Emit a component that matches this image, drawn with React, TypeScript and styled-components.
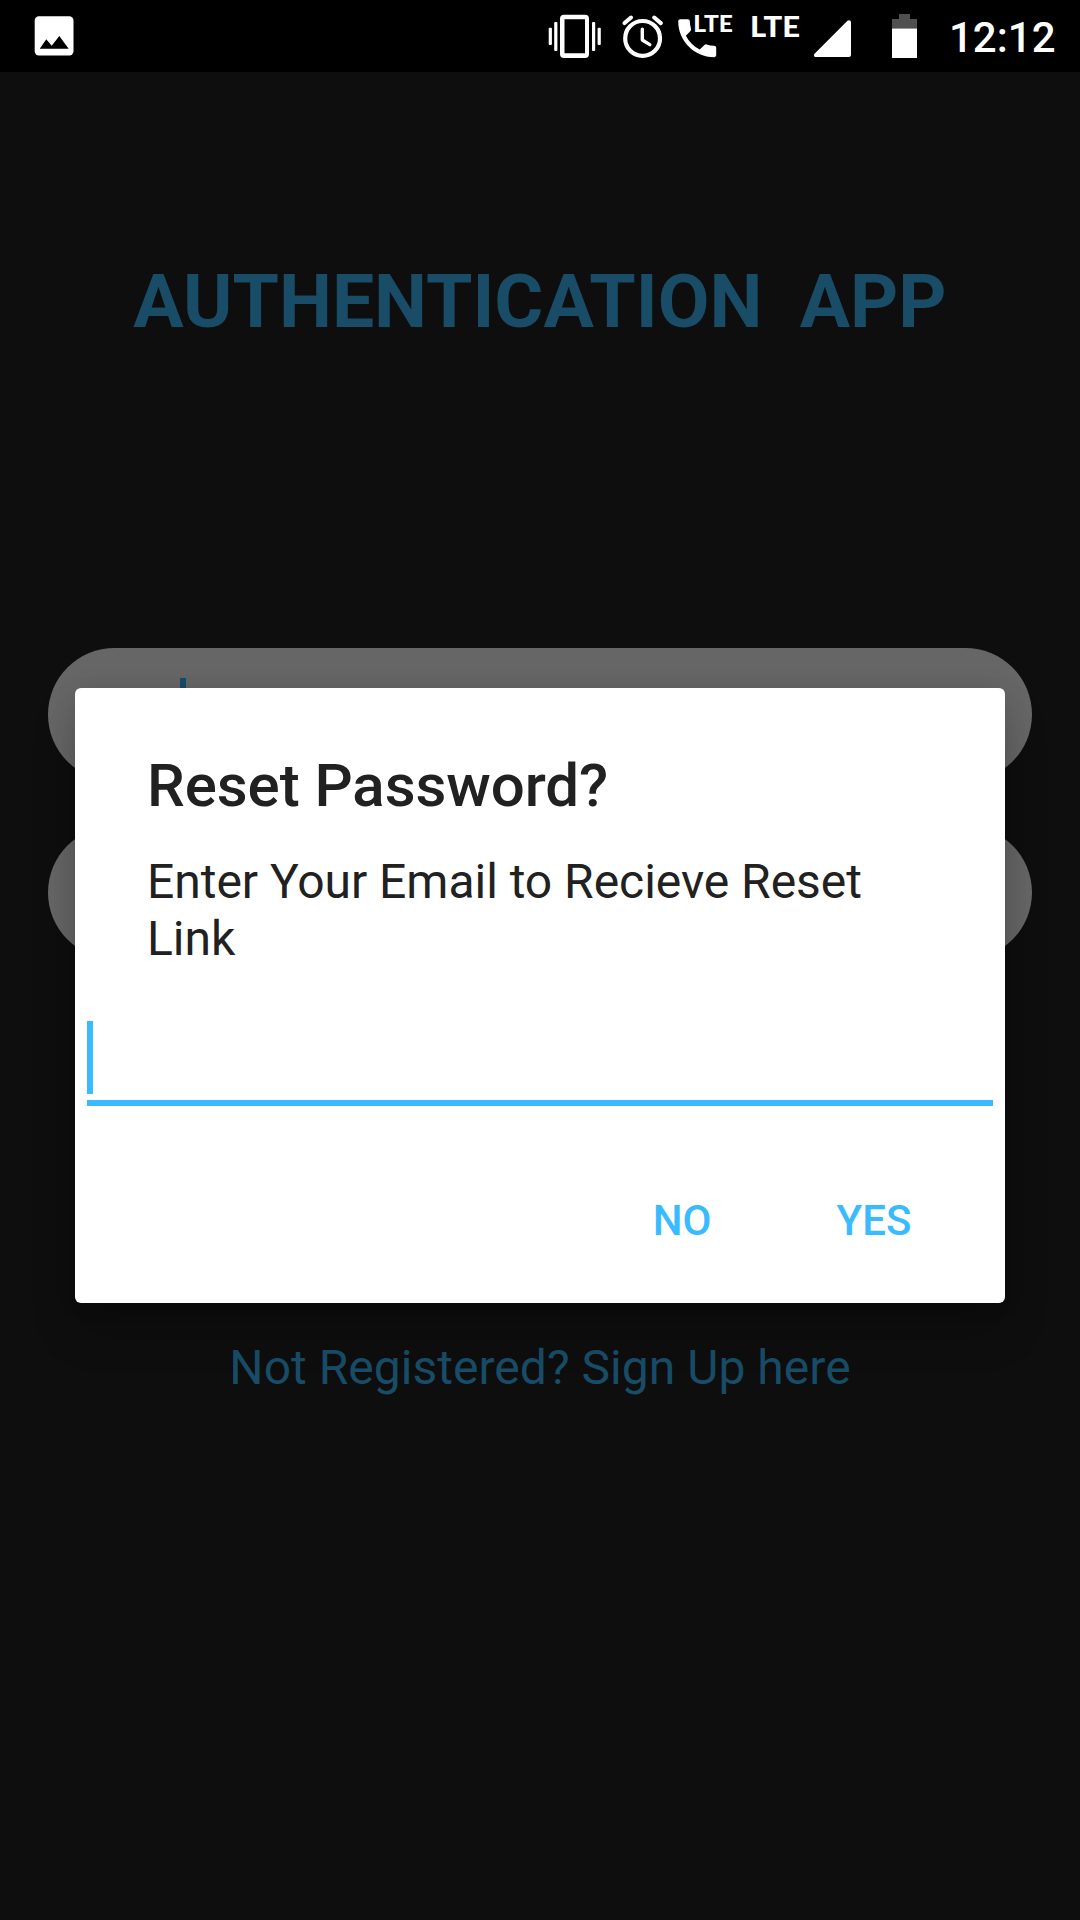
import React from 'react';
import styled, { createGlobalStyle } from 'styled-components';

const ACCENT = '#3bbbff';
const DIMMED_ACCENT = '#184c67';

const GlobalStyle = createGlobalStyle`
  body {
    margin: 0;
    background: #0e0e0e;
    font-family: Roboto, sans-serif;
  }
`;

const Screen = styled.div`
  position: relative;
  display: flex;
  flex-direction: column;
  width: 1080px;
  height: 1920px;
  overflow: hidden;
  background: #0e0e0e;
`;

const StatusBar = styled.header`
  display: flex;
  align-items: center;
  justify-content: space-between;
  box-sizing: border-box;
  height: 72px;
  padding: 0 24px 0 30px;
  background: #000;
  color: #fff;
`;

const StatusIcons = styled.div`
  display: flex;
  align-items: center;
`;

const Icon = styled.svg<{ $gap?: number }>`
  display: block;
  flex: none;
  height: 72px;
  margin-left: ${({ $gap = 0 }) => $gap}px;
  fill: #fff;
`;

const IconText = styled.text`
  font-family: Lato, sans-serif;
  font-weight: 900;
`;

const Clock = styled.time`
  width: 106px;
  margin: 3px 1px 0 31px;
  font-size: 42px;
  font-weight: 500;
  line-height: 50px;
  text-align: right;
  white-space: nowrap;
`;

const LoginPage = styled.main`
  display: flex;
  flex: 1;
  flex-direction: column;
  align-items: center;
`;

const AppTitle = styled.h1`
  margin: 185px 0 0;
  color: ${DIMMED_ACCENT};
  font-size: 75px;
  font-weight: 700;
  line-height: 88px;
  white-space: pre;
`;

const Fields = styled.div`
  display: flex;
  flex-direction: column;
  gap: 45px;
  margin-top: 303px;
`;

const Field = styled.div`
  box-sizing: border-box;
  width: 984px;
  height: 133px;
  padding: 30px 0 0 132px;
  border-radius: 66.5px;
  background: #666;
`;

const Caret = styled.span<{ $color: string }>`
  display: block;
  width: 6px;
  height: 73px;
  background: ${({ $color }) => $color};
`;

const SignUpLink = styled.a`
  margin-top: 381px;
  color: ${DIMMED_ACCENT};
  font-size: 48px;
  line-height: 56px;
  letter-spacing: 0.03px;
`;

const DialogLayer = styled.div`
  position: absolute;
  inset: 72px 0 0;
  display: flex;
  align-items: flex-start;
  justify-content: center;
`;

const Dialog = styled.section`
  display: flex;
  flex-direction: column;
  box-sizing: border-box;
  width: 930px;
  height: 615px;
  margin-top: 616px;
  border-radius: 6px;
  background: #fff;
  box-shadow: 0 28px 44px rgba(0, 0, 0, 0.2), 0 0 24px rgba(0, 0, 0, 0.08);
  color: #212121;
`;

const DialogTitle = styled.h2`
  margin: 63px 72px 0;
  font-size: 60px;
  font-weight: 500;
  line-height: 70px;
  letter-spacing: -0.06px;
`;

const Message = styled.p`
  margin: 32px 72px 0;
  font-size: 48px;
  line-height: 57px;
  letter-spacing: -0.03px;
`;

const EmailInput = styled.div`
  margin: 54px 12px 0;
  padding-bottom: 6px;
  border-bottom: 6px solid ${ACCENT};
`;

const Actions = styled.div`
  display: flex;
  justify-content: flex-end;
  gap: 24px;
  margin: 43px 59px 0;
`;

const ActionButton = styled.button<{ $width: number }>`
  width: ${({ $width }) => $width}px;
  height: 144px;
  padding: 0;
  border: 0;
  background: transparent;
  color: ${ACCENT};
  font: 500 42px/50px Roboto, sans-serif;
`;

const PictureIcon = () => (
  <Icon width="48" viewBox="30 0 48 72">
    <rect x="34.7" y="16.3" width="38.8" height="39.2" rx="4.2" />
    <path fill="#000" d="M39.7 48.7 46.3 39.2 51.7 45.7 59.3 36 68.7 48.7z" />
  </Icon>
);

const VibrateIcon = () => (
  <Icon width="54" viewBox="548 0 54 72">
    <path
      fillRule="evenodd"
      d="M564 14.7h21a4 4 0 0 1 4 4V54a4 4 0 0 1-4 4h-21a4 4 0 0 1-4-4V18.7a4 4 0 0 1 4-4zM564.5 19.2V53.3H585V19.2z"
    />
    <rect x="554.2" y="22" width="3.2" height="29" rx="1" />
    <rect x="548.7" y="27.7" width="3.2" height="17.3" rx="1" />
    <rect x="592" y="22" width="3.2" height="29" rx="1" />
    <rect x="597.6" y="27.7" width="3.2" height="17.3" rx="1" />
  </Icon>
);

const AlarmIcon = () => (
  <Icon $gap={20} width="42" viewBox="622 0 42 72">
    <g fill="none" stroke="#fff" strokeLinecap="round" strokeLinejoin="round">
      <circle cx="642.6" cy="38.4" r="17.4" strokeWidth="4.2" />
      <path strokeWidth="3.4" d="M642.3 29.3V40L649.8 44.6" />
      <path strokeWidth="4" d="M624.6 23.1 631 17.5M654.2 17.5 660.8 23.1" />
    </g>
  </Icon>
);

const LteCallIcon = () => (
  <Icon $gap={12} width="58" viewBox="676 0 58 72">
    <path
      transform="translate(671.9 12.9) scale(2.11)"
      d="M6.62 10.79c1.44 2.83 3.76 5.14 6.59 6.59l2.2-2.2c.27-.27.67-.36 1.02-.24 1.12.37 2.33.57 3.57.57.55 0 1 .45 1 1V20c0 .55-.45 1-1 1-9.39 0-17-7.61-17-17 0-.55.45-1 1-1h3.5c.55 0 1 .45 1 1 0 1.25.2 2.45.57 3.57.11.35.03.74-.25 1.02l-2.2 2.2z"
    />
    <IconText x="693.3" y="32.1" fontSize="22.6" textLength="39.6" lengthAdjust="spacingAndGlyphs">LTE</IconText>
  </Icon>
);

const LteIcon = () => (
  <Icon $gap={16} width="50" viewBox="750 0 50 72">
    <IconText x="750" y="36.8" fontSize="29" textLength="50" lengthAdjust="spacingAndGlyphs">LTE</IconText>
  </Icon>
);

const SignalIcon = () => (
  <Icon $gap={14} width="38" viewBox="814 0 38 72">
    <path d="M847.2 21 814.8 53.6C813 55.4 814 57 816 57H849a2 2 0 0 0 2-2V22.5C851 20.2 848.8 19.4 847.2 21z" />
  </Icon>
);

const BatteryIcon = () => (
  <Icon $gap={40} width="26" viewBox="892 0 26 72">
    <path fill="#505050" d="M899 14h11v5h7v10h-25V19h7z" />
    <rect x="892" y="28.6" width="25" height="29.4" />
  </Icon>
);

export default function App() {
  return (
    <>
      <GlobalStyle />
      <Screen>
        <StatusBar>
          <PictureIcon />
          <StatusIcons>
            <VibrateIcon />
            <AlarmIcon />
            <LteCallIcon />
            <LteIcon />
            <SignalIcon />
            <BatteryIcon />
            <Clock>12:12</Clock>
          </StatusIcons>
        </StatusBar>
        <LoginPage>
          <AppTitle>{'AUTHENTICATION  APP'}</AppTitle>
          <Fields>
            <Field>
              <Caret $color={DIMMED_ACCENT} />
            </Field>
            <Field />
          </Fields>
          <SignUpLink>Not Registered? Sign Up here</SignUpLink>
        </LoginPage>
        <DialogLayer>
          <Dialog role="dialog">
            <DialogTitle>Reset Password?</DialogTitle>
            <Message>Enter Your Email to Recieve Reset Link</Message>
            <EmailInput>
              <Caret $color={ACCENT} />
            </EmailInput>
            <Actions>
              <ActionButton $width={192}>NO</ActionButton>
              <ActionButton $width={144}>YES</ActionButton>
            </Actions>
          </Dialog>
        </DialogLayer>
      </Screen>
    </>
  );
}
